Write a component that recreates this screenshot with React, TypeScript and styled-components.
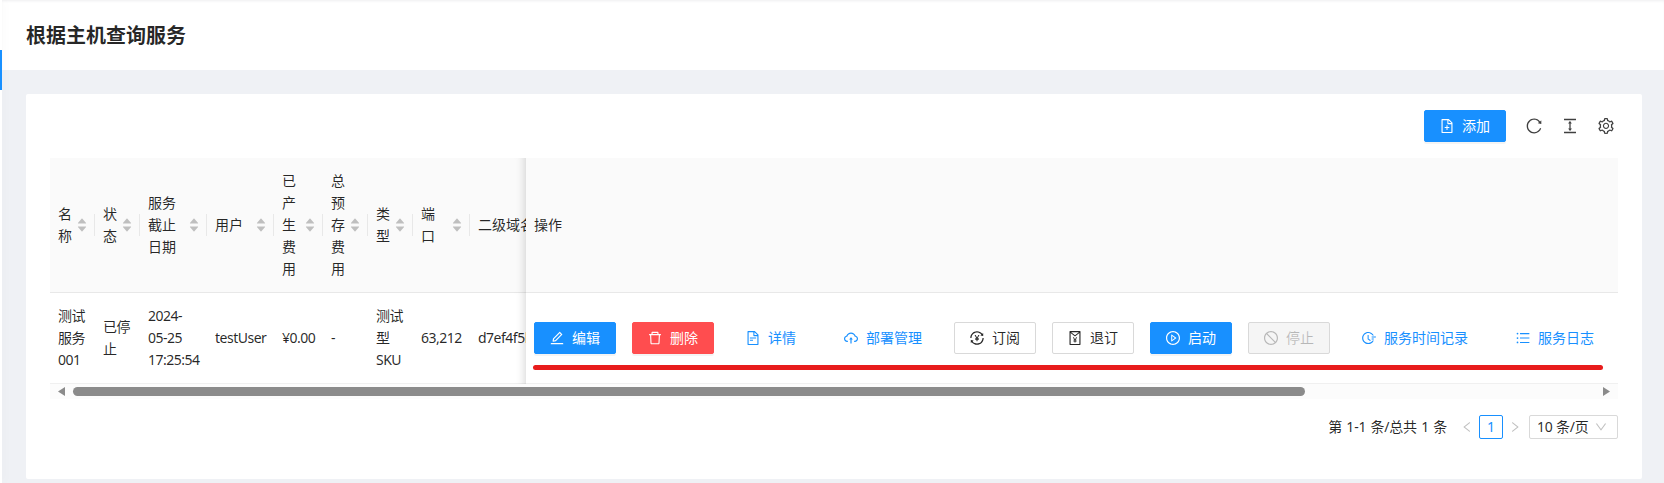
import React from 'react';
import styled, { createGlobalStyle, css } from 'styled-components';
import type { IconType } from 'react-icons';
import {
  AiOutlineFileAdd,
  AiOutlineReload,
  AiOutlineColumnHeight,
  AiOutlineSetting,
  AiOutlineEdit,
  AiOutlineDelete,
  AiOutlineFileText,
  AiOutlineCloudUpload,
  AiOutlineTransaction,
  AiOutlineRedEnvelope,
  AiOutlinePlayCircle,
  AiOutlineStop,
  AiOutlineFieldTime,
  AiOutlineUnorderedList,
  AiOutlineLeft,
  AiOutlineRight,
  AiOutlineDown,
  AiFillCaretUp,
  AiFillCaretDown,
} from 'react-icons/ai';

const GlobalStyle = createGlobalStyle`
  *, *::before, *::after { box-sizing: border-box; }
  body {
    margin: 0;
    background: #eff1f5;
    color: rgba(0, 0, 0, 0.85);
    font: 14px/22px "Noto Sans", "Noto Sans CJK SC", sans-serif;
    overflow: hidden;
  }
`;

const Layout = styled.div`
  display: flex;
  height: 483px;
`;

const Sider = styled.aside`
  position: relative;
  z-index: 1;
  width: 2px;
  padding-top: 50px;
  background: #fff;
  box-shadow: 2px 0 8px rgba(29, 35, 41, 0.05);
`;

const ActiveMark = styled.div`
  height: 40px;
  background: #1890ff;
`;

const Main = styled.main`
  flex: 1;
  min-width: 0;
`;

const PageHeader = styled.header`
  height: 70px;
  padding: 20px 24px 18px;
  background: #fff;
  box-shadow: inset 0 2px 3px -1px rgba(0, 21, 41, 0.07);
`;

const Title = styled.h1`
  margin: 0;
  font-size: 20px;
  line-height: 32px;
  font-weight: 700;
`;

const Card = styled.section`
  margin: 24px 22px 0 24px;
  height: 385px;
  padding: 0 24px;
  background: #fff;
  border-radius: 2px;
`;

const Toolbar = styled.div`
  display: flex;
  align-items: center;
  justify-content: flex-end;
  gap: 20px;
  height: 64px;
  padding-right: 4px;
  color: rgba(0, 0, 0, 0.75);
`;

type Kind = 'primary' | 'danger' | 'default' | 'link' | 'disabled';

const kinds = {
  primary: css`
    background: #1890ff;
    border-color: #1890ff;
    color: #fff;
    box-shadow: 0 2px 0 rgba(0, 0, 0, 0.045);
  `,
  danger: css`
    background: #ff4d4f;
    border-color: #ff4d4f;
    color: #fff;
    box-shadow: 0 2px 0 rgba(0, 0, 0, 0.045);
  `,
  default: css`
    background: #fff;
    border-color: #d9d9d9;
    color: rgba(0, 0, 0, 0.85);
  `,
  link: css`
    background: transparent;
    border-color: transparent;
    color: #1890ff;
  `,
  disabled: css`
    background: #f5f5f5;
    border-color: #d9d9d9;
    color: rgba(0, 0, 0, 0.25);
  `,
};

const Button = styled.button<{ $kind: Kind }>`
  display: inline-flex;
  align-items: center;
  gap: 8px;
  flex: none;
  height: 32px;
  padding: 0 15px;
  border: 1px solid;
  border-radius: 2px;
  font: inherit;
  white-space: nowrap;
  ${(p) => kinds[p.$kind]}
`;

const TableWrap = styled.div`
  position: relative;
`;

const Table = styled.table`
  width: 1568px;
  table-layout: fixed;
  border-collapse: separate;
  border-spacing: 0;
`;

const HeadCell = styled.th<{ $divider?: boolean }>`
  position: relative;
  height: 135px;
  padding: 0 8px;
  background: #fafafa;
  border-bottom: 1px solid #e8e8e8;
  font-weight: 400;
  text-align: left;
  overflow: hidden;
  white-space: ${(p) => (p.$divider ? 'normal' : 'nowrap')};
  ${(p) =>
    p.$divider &&
    css`
      &::after {
        content: '';
        position: absolute;
        right: 0;
        top: 56px;
        width: 1px;
        height: 22px;
        background: rgba(0, 0, 0, 0.07);
      }
    `}
`;

const Cell = styled.td`
  height: 91px;
  padding: 0 8px;
  border-bottom: 1px solid #f0f0f0;
  overflow: hidden;
  white-space: pre;
`;

const fixedColumn = css`
  position: relative;
  overflow: visible;
  &::before {
    content: '';
    position: absolute;
    top: 0;
    bottom: -1px;
    left: -30px;
    width: 30px;
    box-shadow: inset -10px 0 8px -8px rgba(0, 0, 0, 0.15);
    pointer-events: none;
  }
`;

const FixedHeadCell = styled(HeadCell)`
  ${fixedColumn}
`;

const FixedCell = styled(Cell)`
  ${fixedColumn}
`;

const HeadContent = styled.div`
  display: flex;
  align-items: center;
  justify-content: space-between;
`;

const HeadLabel = styled.span<{ $chars: number }>`
  flex: none;
  width: ${(p) => p.$chars * 14}px;
`;

const Sorter = styled.span`
  display: flex;
  flex: none;
  flex-direction: column;
  align-items: center;
  width: 11px;
  color: #bfbfbf;
  svg { display: block; }
  svg + svg { margin-top: -4px; }
`;

const Latin = styled.span<{ $spacing?: number }>`
  letter-spacing: ${(p) => p.$spacing ?? -0.5}px;
`;

const Actions = styled.div`
  display: flex;
  gap: 16px;
`;

const RedLine = styled.div`
  position: absolute;
  left: 483px;
  top: 207px;
  width: 1070px;
  height: 5px;
  border-radius: 3px;
  background: #e81c1c;
`;

const ScrollBar = styled.div`
  display: flex;
  align-items: center;
  height: 15px;
  padding: 0 8px;
  background: #fcfcfc;
`;

const Thumb = styled.div`
  width: 1232px;
  height: 9px;
  margin: 0 auto 0 8px;
  border-radius: 5px;
  background: #8b8b8b;
`;

const ScrollArrow = styled.svg`
  display: block;
  width: 7px;
  height: 10px;
  fill: #8b8b8b;
`;

const Pagination = styled.nav`
  display: flex;
  align-items: center;
  justify-content: flex-end;
  height: 24px;
  margin-top: 16px;
`;

const PageArrow = styled.span`
  display: flex;
  align-items: center;
  justify-content: center;
  width: 24px;
  color: rgba(0, 0, 0, 0.25);
`;

const Total = styled.span`
  margin-right: 8px;
  word-spacing: 0.8px;
`;

const CurrentPage = styled.span`
  width: 24px;
  height: 24px;
  border: 1px solid #1890ff;
  border-radius: 2px;
  color: #1890ff;
  text-align: center;
`;

const PageSize = styled.div`
  display: flex;
  align-items: center;
  justify-content: space-between;
  width: 89px;
  height: 24px;
  margin-left: 2px;
  padding: 0 10px 0 7px;
  border: 1px solid #d9d9d9;
  border-radius: 2px;
  svg { color: rgba(0, 0, 0, 0.25); }
`;

// Crops the 64-unit margin of the Ant glyph grid so the drawing fills its box.
function Icon({ glyph: Glyph, size = 14 }: { glyph: IconType; size?: number }) {
  return <Glyph size={size} viewBox="64 64 896 896" />;
}

const columns = [
  { label: '名称', chars: 1, width: 45, value: '测试\n服务\n001' },
  { label: '状态', chars: 1, width: 45, value: '已停\n止' },
  { label: '服务截止日期', chars: 2, width: 67, value: '2024-\n05-25\n17:25:54' },
  { label: '用户', chars: 2, width: 67, value: 'testUser' },
  { label: '已产生费用', chars: 1, width: 49, value: '¥0.00' },
  { label: '总预存费用', chars: 1, width: 45, value: '-' },
  { label: '类型', chars: 1, width: 45, value: '测试\n型\nSKU' },
  { label: '端口', chars: 1, width: 57, value: '63,212' },
];

const actions: { label: string; kind: Kind; icon: IconType }[] = [
  { label: '编辑', kind: 'primary', icon: AiOutlineEdit },
  { label: '删除', kind: 'danger', icon: AiOutlineDelete },
  { label: '详情', kind: 'link', icon: AiOutlineFileText },
  { label: '部署管理', kind: 'link', icon: AiOutlineCloudUpload },
  { label: '订阅', kind: 'default', icon: AiOutlineTransaction },
  { label: '退订', kind: 'default', icon: AiOutlineRedEnvelope },
  { label: '启动', kind: 'primary', icon: AiOutlinePlayCircle },
  { label: '停止', kind: 'disabled', icon: AiOutlineStop },
  { label: '服务时间记录', kind: 'link', icon: AiOutlineFieldTime },
  { label: '服务日志', kind: 'link', icon: AiOutlineUnorderedList },
];

export default function App() {
  return (
    <Layout>
      <GlobalStyle />
      <Sider>
        <ActiveMark />
      </Sider>
      <Main>
        <PageHeader>
          <Title>根据主机查询服务</Title>
        </PageHeader>
        <Card>
          <Toolbar>
            <Button $kind="primary">
              <Icon glyph={AiOutlineFileAdd} />
              添加
            </Button>
            <Icon glyph={AiOutlineReload} size={16} />
            <Icon glyph={AiOutlineColumnHeight} size={16} />
            <Icon glyph={AiOutlineSetting} size={16} />
          </Toolbar>
          <TableWrap>
            <Table>
              <colgroup>
                {columns.map((c) => (
                  <col key={c.label} width={c.width} />
                ))}
                <col width={56} />
                <col />
              </colgroup>
              <thead>
                <tr>
                  {columns.map((c) => (
                    <HeadCell key={c.label} $divider>
                      <HeadContent>
                        <HeadLabel $chars={c.chars}>{c.label}</HeadLabel>
                        <Sorter>
                          <AiFillCaretUp size={12} />
                          <AiFillCaretDown size={12} />
                        </Sorter>
                      </HeadContent>
                    </HeadCell>
                  ))}
                  <HeadCell>二级域名</HeadCell>
                  <FixedHeadCell>操作</FixedHeadCell>
                </tr>
              </thead>
              <tbody>
                <tr>
                  {columns.map((c) => (
                    <Cell key={c.label}>
                      <Latin>{c.value}</Latin>
                    </Cell>
                  ))}
                  <Cell>
                    <Latin>d7ef4f5b</Latin>
                  </Cell>
                  <FixedCell>
                    <Actions>
                      {actions.map((a) => (
                        <Button key={a.label} $kind={a.kind} disabled={a.kind === 'disabled'}>
                          <Icon glyph={a.icon} />
                          {a.label}
                        </Button>
                      ))}
                    </Actions>
                  </FixedCell>
                </tr>
              </tbody>
            </Table>
            <RedLine />
          </TableWrap>
          <ScrollBar>
            <ScrollArrow viewBox="0 0 7 10">
              <path d="M7 0v9L0 4.5z" />
            </ScrollArrow>
            <Thumb />
            <ScrollArrow viewBox="0 0 7 10">
              <path d="M0 0v9L7 4.5z" />
            </ScrollArrow>
          </ScrollBar>
          <Pagination>
            <Total>
              <Latin $spacing={-0.2}>第 1-1 条/总共 1 条</Latin>
            </Total>
            <PageArrow>
              <Icon glyph={AiOutlineLeft} size={12} />
            </PageArrow>
            <CurrentPage>1</CurrentPage>
            <PageArrow>
              <Icon glyph={AiOutlineRight} size={12} />
            </PageArrow>
            <PageSize>
              <Latin $spacing={-0.2}>10 条/页</Latin>
              <Icon glyph={AiOutlineDown} size={12} />
            </PageSize>
          </Pagination>
        </Card>
      </Main>
    </Layout>
  );
}
